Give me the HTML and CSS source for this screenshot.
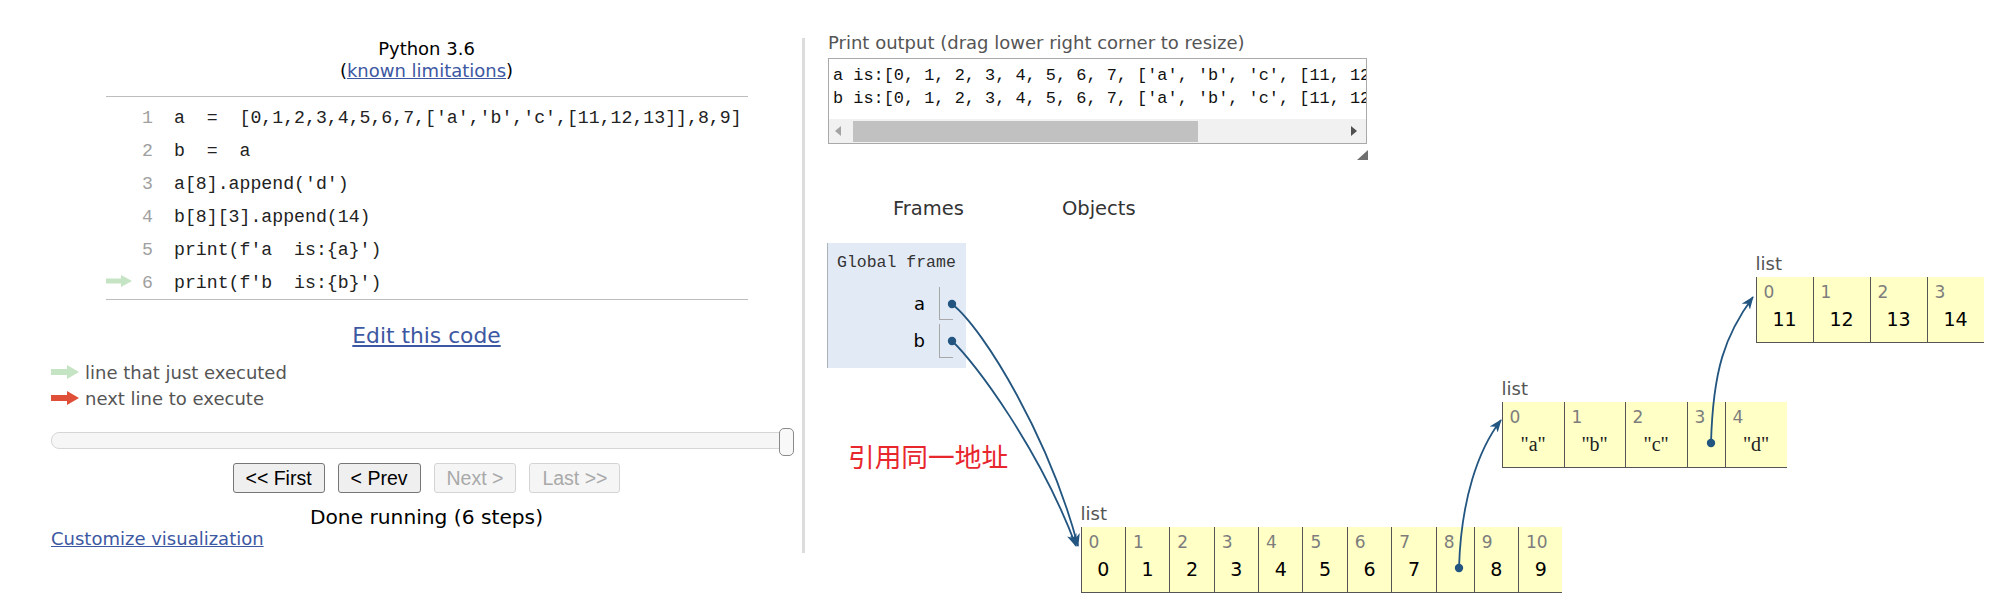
FILE: index.html
```html
<!DOCTYPE html>
<html lang="en">
<head>
<meta charset="utf-8">
<title>Python Tutor</title>
<link rel="stylesheet" href="styles.css">
</head>
<body>
<div class="page">
  <div class="left">
    <div class="lang">Python 3.6<br>(<a class="link" href="#">known limitations</a>)</div>
    <div class="code">
      <div class="line"><span class="gutter"></span><span class="ln">1</span><span class="src">a  =  [0,1,2,3,4,5,6,7,['a','b','c',[11,12,13]],8,9]</span></div>
      <div class="line"><span class="gutter"></span><span class="ln">2</span><span class="src">b  =  a</span></div>
      <div class="line"><span class="gutter"></span><span class="ln">3</span><span class="src">a[8].append('d')</span></div>
      <div class="line"><span class="gutter"></span><span class="ln">4</span><span class="src">b[8][3].append(14)</span></div>
      <div class="line"><span class="gutter"></span><span class="ln">5</span><span class="src">print(f'a  is:{a}')</span></div>
      <div class="line"><span class="gutter"><svg class="cur-arrow" width="26" height="12" viewBox="0 0 26 12"><polygon points="0,3.5 15,3.5 15,0 26,6 15,12 15,8.5 0,8.5" fill="#c5e4c3"/></svg></span><span class="ln">6</span><span class="src">print(f'b  is:{b}')</span></div>
    </div>
    <div class="edit"><a class="link" href="#">Edit this code</a></div>
    <div class="legend">
      <div class="legend-row"><svg class="legend-arrow" width="28" height="14" viewBox="0 0 28 14"><polygon points="0,4 16,4 16,0 28,7 16,14 16,10 0,10" fill="#c5e4c3"/></svg><span>line that just executed</span></div>
      <div class="legend-row"><svg class="legend-arrow" width="28" height="14" viewBox="0 0 28 14"><polygon points="0,4 16,4 16,0 28,7 16,14 16,10 0,10" fill="#df4f37"/></svg><span>next line to execute</span></div>
    </div>
    <div class="slider"><div class="track"></div><div class="handle"></div></div>
    <div class="vcr">
      <button class="btn">&lt;&lt; First</button>
      <button class="btn">&lt; Prev</button>
      <button class="btn" disabled>Next &gt;</button>
      <button class="btn" disabled>Last &gt;&gt;</button>
    </div>
    <div class="status">Done running (6 steps)</div>
    <div class="customize"><a class="link" href="#">Customize visualization</a></div>
  </div>

  <div class="right">
    <div class="print-label">Print output (drag lower right corner to resize)</div>
    <div class="print-box">
      <div class="print-text">a is:[0, 1, 2, 3, 4, 5, 6, 7, ['a', 'b', 'c', [11, 12, 13, 14], 'd'], 8, 9]
b is:[0, 1, 2, 3, 4, 5, 6, 7, ['a', 'b', 'c', [11, 12, 13, 14], 'd'], 8, 9]</div>
      <div class="hscroll">
        <svg class="sb-arrow" width="8" height="10" viewBox="0 0 8 10"><polygon points="7,0 7,10 1,5" fill="#a3a3a3"/></svg>
        <div class="sb-thumb"></div>
        <svg class="sb-arrow sb-right" width="8" height="10" viewBox="0 0 8 10"><polygon points="1,0 1,10 7,5" fill="#505050"/></svg>
      </div>
      <svg class="grip" width="11" height="10" viewBox="0 0 11 10"><polygon points="11,0 11,10 0,10" fill="#707070"/></svg>
    </div>
    <div class="viz-head"><span class="h-frames">Frames</span><span class="h-objects">Objects</span></div>
    <div class="frame">
      <div class="frame-title">Global frame</div>
      <div class="vars">
        <div class="var-name">a</div><div class="var-val"></div>
        <div class="var-name">b</div><div class="var-val"></div>
      </div>
    </div>
  </div>

  <div class="heap">
    <div class="obj obj-inner">
      <div class="type">list</div>
      <div class="cells">
        <div class="cell w57"><div class="idx">0</div><div class="val">11</div></div>
        <div class="cell w57"><div class="idx">1</div><div class="val">12</div></div>
        <div class="cell w57"><div class="idx">2</div><div class="val">13</div></div>
        <div class="cell w57"><div class="idx">3</div><div class="val">14</div></div>
      </div>
    </div>
    <div class="obj obj-mid">
      <div class="type">list</div>
      <div class="cells">
        <div class="cell w62"><div class="idx">0</div><div class="val str">"a"</div></div>
        <div class="cell w61"><div class="idx">1</div><div class="val str">"b"</div></div>
        <div class="cell w62"><div class="idx">2</div><div class="val str">"c"</div></div>
        <div class="cell w38"><div class="idx">3</div><div class="val"></div></div>
        <div class="cell w62"><div class="idx">4</div><div class="val str">"d"</div></div>
      </div>
    </div>
    <div class="obj obj-outer">
      <div class="type">list</div>
      <div class="cells">
        <div class="cell w44"><div class="idx">0</div><div class="val">0</div></div>
        <div class="cell w44"><div class="idx">1</div><div class="val">1</div></div>
        <div class="cell w44"><div class="idx">2</div><div class="val">2</div></div>
        <div class="cell w44"><div class="idx">3</div><div class="val">3</div></div>
        <div class="cell w44"><div class="idx">4</div><div class="val">4</div></div>
        <div class="cell w44"><div class="idx">5</div><div class="val">5</div></div>
        <div class="cell w44"><div class="idx">6</div><div class="val">6</div></div>
        <div class="cell w44"><div class="idx">7</div><div class="val">7</div></div>
        <div class="cell w38"><div class="idx">8</div><div class="val"></div></div>
        <div class="cell w44"><div class="idx">9</div><div class="val">8</div></div>
        <div class="cell w44"><div class="idx">10</div><div class="val">9</div></div>
      </div>
    </div>
  </div>

  <div class="note">引用同一地址</div>

  <svg class="arrows" width="2003" height="616" viewBox="0 0 2003 616">
    <defs>
      <marker id="ah" markerWidth="13" markerHeight="10" refX="12" refY="5" orient="auto" markerUnits="userSpaceOnUse">
        <path d="M0,0 L13,5 L0,10 L3.5,5 z" fill="#22557f"/>
      </marker>
    </defs>
    <g fill="none" stroke="#22557f" stroke-width="1.8">
      <path d="M952,304 C985,330 1050,440 1078,546" marker-end="url(#ah)"/>
      <path d="M952,341 C975,362 1040,450 1076,546" marker-end="url(#ah)"/>
      <path d="M1459,568 C1461,500 1478,450 1501,420" marker-end="url(#ah)"/>
      <path d="M1711,443 C1713,370 1725,335 1753,297" marker-end="url(#ah)"/>
    </g>
    <g fill="#22557f">
      <circle cx="952" cy="304" r="4.2"/>
      <circle cx="952" cy="341" r="4.2"/>
      <circle cx="1459" cy="568" r="4.2"/>
      <circle cx="1711" cy="443" r="4.2"/>
    </g>
  </svg>
</div>
</body>
</html>
```

FILE: styles.css
```css
* { box-sizing: border-box; }
html, body { margin: 0; padding: 0; background: #fff; }
body { font-family: "DejaVu Sans", Verdana, sans-serif; color: #000; }

.page {
  position: relative;
  width: 2003px;
  height: 616px;
  overflow: hidden;
  display: flex;
  align-items: flex-start;
}

.link { color: #3d58a2; text-decoration: underline; }

/* ---------- left panel ---------- */
.left {
  margin-top: 38px;
  width: 805px;
  height: 515px;
  padding-left: 51px;
  border-right: 3px solid #dcdcdc;
  flex: none;
}

.lang {
  text-align: center;
  font-size: 18px;
  line-height: 22px;
}

.code {
  margin-top: 14px;
  margin-left: 55px;
  width: 642px;
  border-top: 1px solid #bdbdbd;
  border-bottom: 1px solid #bdbdbd;
  padding-top: 4px;
}
.line {
  display: flex;
  align-items: center;
  height: 33px;
  font-family: "Liberation Mono", monospace;
  font-size: 18.2px;
  white-space: pre;
}
.gutter { width: 27px; display: flex; align-items: center; }
.cur-arrow { display: block; margin-top: -3px; }
.ln { width: 20px; text-align: right; color: #a0a0a0; }
.src { margin-left: 21px; color: #222; }

.edit {
  margin-top: 23px;
  text-align: center;
  font-size: 21.8px;
  line-height: 26px;
}

.legend { margin-top: 10px; }
.legend-row {
  display: flex;
  align-items: center;
  height: 26px;
  font-size: 18px;
  color: #555;
}
.legend-arrow { display: block; margin-right: 6px; flex: none; }

.slider {
  position: relative;
  margin-top: 21px;
  width: 742px;
  height: 17px;
}
.track {
  height: 17px;
  background: #f6f6f6;
  border: 1px solid #d6d6d6;
  border-radius: 8px;
}
.handle {
  position: absolute;
  left: 728px;
  top: -4px;
  width: 15px;
  height: 28px;
  background: #f8f8f8;
  border: 1px solid #8a8a8a;
  border-radius: 5px;
}

.vcr {
  margin-top: 14px;
  display: flex;
  justify-content: center;
  gap: 13px;
}
.btn {
  height: 30px;
  padding: 0 12px;
  font-family: "Liberation Sans", Arial, sans-serif;
  font-size: 19.5px;
  color: #000;
  background: #efefef;
  border: 1px solid #767676;
  border-radius: 3px;
}
.btn:disabled {
  color: #a9a9a9;
  background: #f5f5f5;
  border-color: #d4d4d4;
}

.status {
  margin-top: 12px;
  text-align: center;
  font-size: 20.2px;
  line-height: 24px;
}
.customize {
  font-size: 18px;
  line-height: 20px;
}

/* ---------- right panel ---------- */
.right {
  flex: none;
  padding-left: 23px;
  padding-top: 32px;
}
.print-label {
  font-size: 18px;
  line-height: 22px;
  color: #555;
}
.print-box {
  position: relative;
  margin-top: 4px;
  width: 539px;
  border: 1px solid #a9a9a9;
}
.print-text {
  height: 60px;
  padding: 5px 0 0 4px;
  font-family: "Liberation Mono", monospace;
  font-size: 16.9px;
  line-height: 23px;
  white-space: pre;
  overflow: hidden;
  color: #111;
}
.hscroll {
  height: 24px;
  background: #f1f1f1;
  display: flex;
  align-items: center;
  padding-left: 5px;
}
.sb-arrow { display: block; flex: none; }
.sb-thumb {
  margin-left: 11px;
  width: 345px;
  height: 21px;
  background: #c1c1c1;
}
.sb-right { margin-left: auto; margin-right: 8px; }
.grip {
  position: absolute;
  right: -2px;
  bottom: -17px;
}

.viz-head {
  margin-top: 53px;
  font-size: 19.5px;
  line-height: 24px;
  color: #333;
  display: flex;
}
.h-frames { margin-left: 65px; }
.h-objects { margin-left: 98px; }

.frame {
  margin-top: 22px;
  margin-left: -1px;
  width: 139px;
  background: #e2eaf5;
  border-left: 1px solid #a9b3b8;
  padding-bottom: 10px;
}
.frame-title {
  padding: 10px 0 0 9px;
  font-family: "Liberation Mono", monospace;
  font-size: 16.5px;
  line-height: 20px;
  color: #333;
  white-space: pre;
}
.vars {
  margin-top: 14px;
  display: grid;
  grid-template-columns: 111px 14px;
  grid-template-rows: 33px 34px;
  row-gap: 4px;
}
.var-name {
  text-align: right;
  padding-right: 14px;
  font-size: 18px;
  line-height: 34px;
}
.var-val {
  border-left: 1px solid #a8a8a8;
  border-bottom: 1px solid #a8a8a8;
}

/* ---------- heap diagram ---------- */
.heap { position: absolute; left: 0; top: 0; }
.obj { position: absolute; }
.obj-inner { left: 1755.6px; top: 253px; }
.obj-mid { left: 1501.6px; top: 378px; }
.obj-outer { left: 1080.5px; top: 503px; }
.type {
  font-size: 18px;
  line-height: 22px;
  margin-bottom: 2px;
  color: #555;
}
.cells { display: flex; }
.cell {
  height: 66px;
  padding-top: 6px;
  background: #ffffc6;
  border-left: 1px solid #555;
  border-bottom: 1px solid #555;
  flex: none;
}
.w38 { width: 38px; }
.w44 { width: 44.4px; }
.w57 { width: 57px; }
.w61 { width: 61px; }
.w62 { width: 62px; }
.idx {
  padding-left: 7px;
  font-size: 17px;
  line-height: 18px;
  color: #7d7d7d;
}
.val {
  margin-top: 6px;
  text-align: center;
  font-size: 19px;
  line-height: 24px;
  height: 24px;
}
.val.str {
  font-family: "Liberation Serif", serif;
  font-size: 20px;
  color: #222;
}

.note {
  position: absolute;
  left: 848px;
  top: 440px;
  font-family: "Noto Sans CJK SC", sans-serif;
  font-size: 26.7px;
  line-height: 32px;
  color: #e8262e;
}

.arrows {
  position: absolute;
  left: 0;
  top: 0;
  pointer-events: none;
}
```
